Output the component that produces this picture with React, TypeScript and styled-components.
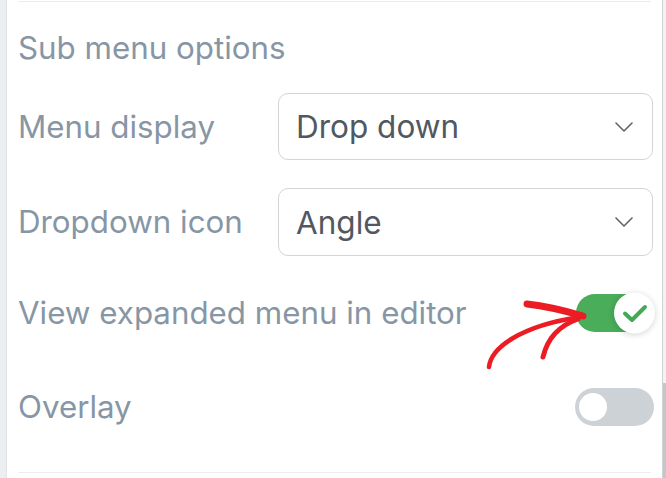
import React from "react";
import styled, { createGlobalStyle } from "styled-components";

const Global = createGlobalStyle`
  html, body { margin: 0; padding: 0; background: #ffffff; }
  body { width: 666px; height: 478px; overflow: hidden; font-family: Inter, "Noto Sans", sans-serif; }
`;

const Page = styled.div`
  display: flex;
  width: 666px;
  height: 478px;
  background: #ffffff;
  position: relative;
`;

const LeftStrip = styled.div`
  width: 6px;
  flex: none;
  background: #eceeef;
  border-right: 1px solid #dfe2e4;
`;

const Panel = styled.div`
  flex: 1;
  display: flex;
  flex-direction: column;
  padding: 0 9px 0 11px;
`;

const Scrollbar = styled.div`
  width: 3px;
  flex: none;
  border-left: 1px solid #cfd1d3;
  background: #f3f3f3;
  display: flex;
  flex-direction: column;
  justify-content: flex-end;
`;

const Thumb = styled.div`
  height: 95px;
  background: #c4c6c8;
`;

const Divider = styled.div<{ $top: number }>`
  height: 1px;
  background: #ececec;
  margin-top: ${(p) => p.$top}px;
  margin-right: 2px;
`;

const Title = styled.div`
  margin-top: 29px;
  font-size: 31.3px;
  line-height: 34px;
  color: #8796a5;
`;

const Row = styled.div<{ $top: number; $h: number }>`
  display: flex;
  align-items: center;
  justify-content: space-between;
  margin-top: ${(p) => p.$top}px;
  height: ${(p) => p.$h}px;
`;

const Label = styled.div<{ $auto?: boolean }>`
  font-size: 31.3px;
  line-height: 34px;
  color: #8796a5;
  width: ${(p) => (p.$auto ? "auto" : "260px")};
  flex: none;
`;

const Select = styled.div`
  flex: 1;
  align-self: stretch;
  box-sizing: border-box;
  border: 1.5px solid #d2d4d6;
  border-radius: 10px;
  display: flex;
  align-items: center;
  justify-content: space-between;
  padding: 0 19px 0 17px;
  font-size: 31.5px;
  color: #505861;
`;

const Chevron = () => (
  <svg width="18" height="10" viewBox="0 0 18 10" fill="none">
    <path d="M1 1 L9 9 L17 1" stroke="#5c646c" strokeWidth="1.6" strokeLinecap="round" strokeLinejoin="round" />
  </svg>
);

const Track = styled.div<{ $on: boolean }>`
  position: relative;
  width: ${(p) => (p.$on ? 77 : 79)}px;
  height: 38px;
  border-radius: 19px;
  background: ${(p) => (p.$on ? "#49ad5a" : "#cdd2d6")};
  margin-right: ${(p) => (p.$on ? 0 : -1)}px;
`;

const Knob = styled.div<{ $on: boolean }>`
  position: absolute;
  top: 50%;
  transform: translateY(-50%);
  border-radius: 50%;
  background: #ffffff;
  display: flex;
  align-items: center;
  justify-content: center;
  ${(p) =>
    p.$on
      ? `width: 41px; height: 41px; right: -2px; box-shadow: 0 1px 6px rgba(0,0,0,0.18);`
      : `width: 28px; height: 28px; left: 4px;`}
`;

const Toggle = ({ on }: { on: boolean }) => (
  <Track $on={on}>
    <Knob $on={on}>
      {on && (
        <svg width="26" height="18" viewBox="0 0 26 18" fill="none">
          <path d="M3 9 L10 15.5 L23 2.5" stroke="#44a857" strokeWidth="4" strokeLinecap="round" strokeLinejoin="round" />
        </svg>
      )}
    </Knob>
  </Track>
);

const Annotation = styled.svg`
  position: absolute;
  left: 480px;
  top: 295px;
  pointer-events: none;
`;

const Arrow = () => (
  <Annotation width="110" height="80" viewBox="480 295 110 80">
    <g stroke="#ec1c24" fill="none" strokeLinecap="round" strokeLinejoin="round">
      <path d="M489 367 C 491 348 520 326 580 317" strokeWidth="4.5" />
      <path d="M543 357 C 547 340 558 326 578 319" strokeWidth="5" />
      <path d="M527 304 C 545 306 566 311 583 316" strokeWidth="7" />
    </g>
  </Annotation>
);

export default function App() {
  return (
    <>
      <Global />
      <Page>
        <LeftStrip />
        <Panel>
          <Divider $top={1} />
          <Title>Sub menu options</Title>
          <Row $top={28} $h={67}>
            <Label>Menu display</Label>
            <Select>
              <span>Drop down</span>
              <Chevron />
            </Select>
          </Row>
          <Row $top={28} $h={68}>
            <Label>Dropdown icon</Label>
            <Select>
              <span>Angle</span>
              <Chevron />
            </Select>
          </Row>
          <Row $top={38} $h={38}>
            <Label $auto>View expanded menu in editor</Label>
            <Toggle on />
          </Row>
          <Row $top={56} $h={38}>
            <Label>Overlay</Label>
            <Toggle on={false} />
          </Row>
          <Divider $top={46} />
        </Panel>
        <Scrollbar>
          <Thumb />
        </Scrollbar>
        <Arrow />
      </Page>
    </>
  );
}
